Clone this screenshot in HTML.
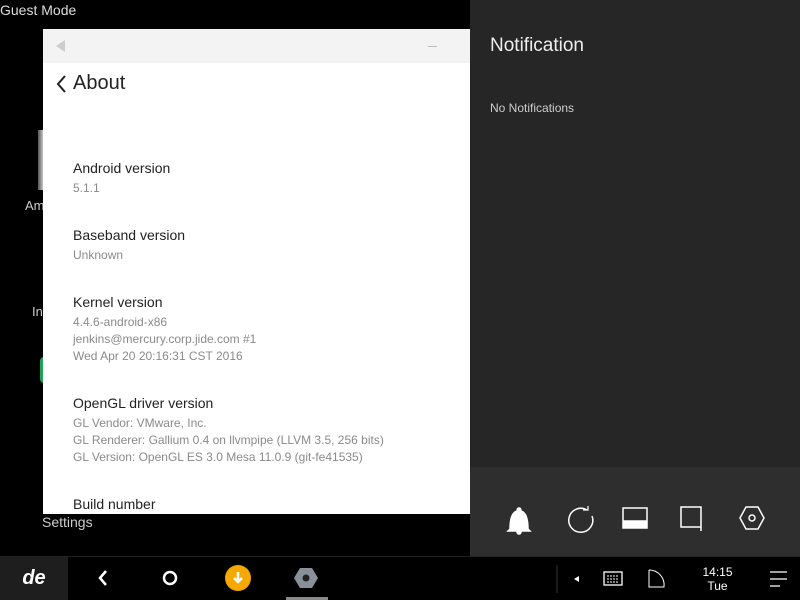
<!DOCTYPE html>
<html><head><style>
*{margin:0;padding:0;box-sizing:border-box}
body{width:800px;height:600px;background:#000;font-family:"Liberation Sans",sans-serif;position:relative;overflow:hidden}
.a{position:absolute}
.t{color:#222;font-size:14px}
.s{color:#8a8a8a;font-size:12px;line-height:17px}
</style></head><body>
<div class="a" style="left:0;top:2px;color:#ddd;font-size:14px">Guest Mode</div>
<div class="a" style="left:38px;top:130px;width:6px;height:60px;background:linear-gradient(90deg,#555,#ddd)"></div>
<div class="a" style="left:25px;top:198px;color:#ccc;font-size:13px">Am</div>
<div class="a" style="left:32px;top:304px;color:#ccc;font-size:13px">In</div>
<div class="a" style="left:40px;top:357px;width:6px;height:26px;background:#1fa35a;border-radius:4px 0 0 4px"></div>
<div class="a" style="left:42px;top:514px;color:#ccc;font-size:14px">Settings</div>
<div class="a" style="left:43px;top:29px;width:427px;height:485px;background:#fff">
 <div class="a" style="left:0;top:0;width:427px;height:34px;background:#f3f3f3"></div>
 <div class="a" style="left:13px;top:11px;width:0;height:0;border-top:6px solid transparent;border-bottom:6px solid transparent;border-right:9px solid #ccc"></div>
 <div class="a" style="left:385px;top:17px;width:9px;height:1px;background:#bbb"></div>
 <svg class="a" style="left:12px;top:45px" width="14" height="20"><path d="M10 2 l-7 8 7 8" stroke="#222" stroke-width="2" fill="none"/></svg>
 <div class="a" style="left:30px;top:43px;font-size:20px;color:#222">About</div>
 <div class="a t" style="left:30px;top:131px">Android version</div>
 <div class="a s" style="left:30px;top:151px">5.1.1</div>
 <div class="a t" style="left:30px;top:198px">Baseband version</div>
 <div class="a s" style="left:30px;top:218px">Unknown</div>
 <div class="a t" style="left:30px;top:265px">Kernel version</div>
 <div class="a s" style="left:30px;top:285px">4.4.6-android-x86<br>jenkins@mercury.corp.jide.com #1<br>Wed Apr 20 20:16:31 CST 2016</div>
 <div class="a t" style="left:30px;top:366px">OpenGL driver version</div>
 <div class="a s" style="left:30px;top:386px">GL Vendor: VMware, Inc.<br>GL Renderer: Gallium 0.4 on llvmpipe (LLVM 3.5, 256 bits)<br>GL Version: OpenGL ES 3.0 Mesa 11.0.9 (git-fe41535)</div>
 <div class="a t" style="left:30px;top:467px">Build number</div>
</div>
<div class="a" style="left:470px;top:0;width:330px;height:467px;background:#262626"></div>
<div class="a" style="left:470px;top:467px;width:330px;height:89px;background:#2e2e2e"></div>
<div class="a" style="left:490px;top:35px;color:#eee;font-size:19px">Notification</div>
<div class="a" style="left:490px;top:101px;color:#ccc;font-size:12px">No Notifications</div>
<svg class="a" style="left:470px;top:480px" width="330" height="76" fill="none" stroke="#fff" stroke-width="1.5">
 <path d="M40 49 q0-16 7-18 q0-3 2-3 q2 0 2 3 q7 2 7 18 l2 2 h-22z" fill="#fff"/><circle cx="49" cy="52" r="2" fill="#fff"/>
 <path d="M117 30 a12 12 0 1 0 5 6"/><path d="M113 30 l5 0 0 -4" stroke-width="1.2"/>
 <rect x="153" y="28" width="24" height="20"/><rect x="154" y="41" width="22" height="6" fill="#fff"/>
 <path d="M211 27 h20 v20 h-20z M231 47 v4"/>
 <path d="M270 38 l6-11 h12 l6 11 -6 11 h-12z"/><circle cx="282" cy="38" r="3"/>
</svg>
<div class="a" style="left:0;top:556px;width:800px;height:44px;background:#000;border-top:1px solid #222"></div>
<div class="a" style="left:0;top:557px;width:68px;height:43px;background:#1e1e1e;color:#fff;font-size:20px;font-weight:bold;text-align:center;line-height:43px;font-style:italic">de</div>
<svg class="a" style="left:68px;top:557px" width="300" height="43">
 <path d="M38 14 l-6 7 6 7" stroke="#fff" stroke-width="2.5" fill="none"/>
 <circle cx="102" cy="21" r="6" stroke="#fff" stroke-width="2.5" fill="none"/>
 <circle cx="170" cy="21" r="13" fill="#f5a800"/><path d="M170 15 v9 M166 21 l4 4 4-4" stroke="#fff" stroke-width="2.5" fill="none"/>
 <path d="M226 21 l6-10 h12 l6 10 -6 10 h-12z" fill="#8a9099"/><circle cx="238" cy="21" r="3.5" fill="#222"/>
 <rect x="218" y="40" width="42" height="3" fill="#888"/>
</svg>
<svg class="a" style="left:550px;top:557px" width="250" height="43">
 <path d="M7 8 v28" stroke="#333"/>
 <path d="M24 22 l5-3 v6z" fill="#fff"/>
 <rect x="54" y="15" width="18" height="13" stroke="#fff" fill="none" stroke-width="1.3"/><path d="M57 19 h12 M57 22 h12 M57 25 h12" stroke="#fff" stroke-dasharray="2 1"/>
 <path d="M99 13 v17 h15 a15 15 0 0 0 -15 -17" stroke="#fff" fill="none"/>
 <path d="M220 15 h17 M220 22 h17 M220 29 h10" stroke="#fff" stroke-width="1.3"/>
</svg>
<div class="a" style="left:690px;top:565px;width:55px;text-align:center;color:#fff;font-size:12px;line-height:14px">14:15<br>Tue</div>
</body></html>
